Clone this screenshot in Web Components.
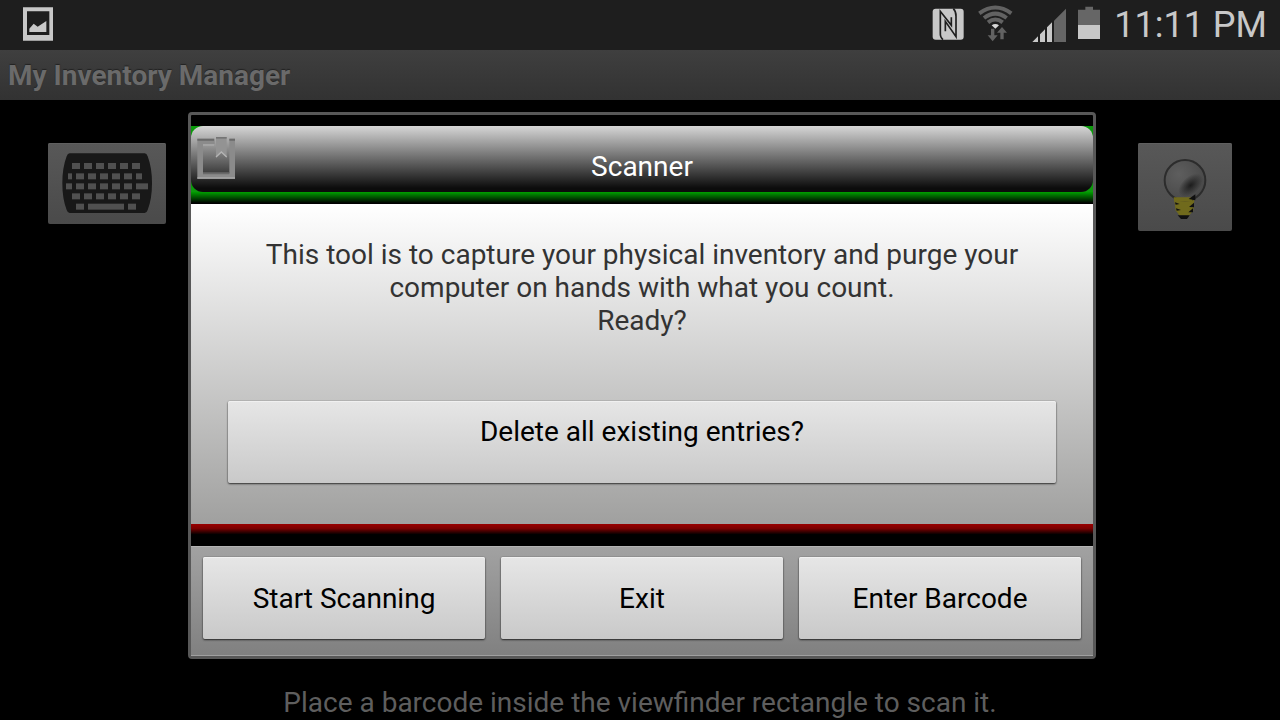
<!DOCTYPE html>
<html lang="en">
<head>
<meta charset="utf-8">
<meta name="viewport" content="width=device-width, initial-scale=1">
<title>My Inventory Manager</title>
<style>
    html, body {
        margin: 0;
        background: #000;
    }
    body {
        font-family: Roboto, "Noto Sans", sans-serif;
        font-size: 28px;
        line-height: 33px;
    }
</style>
</head>
<body>
<inventory-app></inventory-app>

<script>
class StatusBar extends HTMLElement {
    constructor() {
        super();
        this.shadowDOM = this.attachShadow({ mode: 'open' });
    }

    connectedCallback() {
        this.render();
    }

    render() {
        this.shadowDOM.innerHTML = `
        <style>
            :host {
                display: flex;
                align-items: center;
                gap: 12px;
                height: 50px;
                padding: 0 13px 0 20px;
                box-sizing: border-box;
                background: #1e1e1e;
                color: #c8c8c8;
            }
            svg {
                display: block;
                flex: none;
                height: 40px;
            }
            .spacer {
                flex: 1;
            }
            time {
                font-size: 36px;
                line-height: 46px;
                white-space: nowrap;
            }
        </style>
        <svg width="36" viewBox="60 15 108 120" aria-hidden="true">
            <path fill="#c8c8c8" fill-rule="evenodd" d="M69 22H159V122H69ZM81 34V105H148V34Z"/>
            <path fill="#c8c8c8" d="M88 96V86L101 71L113 80L139 63V96Z"/>
        </svg>
        <span class="spacer"></span>
        <svg width="34" viewBox="39 15 102 120" aria-hidden="true">
            <rect x="41" y="26" width="93" height="93" rx="9" fill="#c8c8c8"/>
            <g fill="none" stroke="#1e1e1e" stroke-width="5">
                <path d="M72 119Q63 112 64 98V34L97 76V52"/>
                <path d="M79 94V64L111 110V48Q111 34 103 26"/>
            </g>
        </svg>
        <svg width="40" viewBox="177 15 120 120" aria-hidden="true">
            <g fill="none" stroke="#626262" stroke-width="12">
                <path d="M181 40Q229 5 277 40"/>
                <path d="M195 54Q229 28 263 54"/>
                <path d="M207 67Q229 50 251 67"/>
            </g>
            <path fill="#d8d8d8" d="M218 76Q229 68 240 76L229 86Z"/>
            <path fill="#626262" d="M216 86H226V106H236L221 124L206 106H216ZM249 81L264 98H254V118H244V98H234Z"/>
        </svg>
        <svg width="36" viewBox="333 15 108 120" aria-hidden="true">
            <path fill="#666" d="M405 62L441 26V126H405Z"/>
            <path fill="#c8c8c8" d="M340 126L357 109V126ZM363 103L378 88V126H363ZM384 82L399 67V126H384Z"/>
        </svg>
        <svg width="24" viewBox="477 15 72 120" aria-hidden="true">
            <path fill="#666" d="M499 20H522V29H543V75H477V29H499Z"/>
            <path fill="#c8c8c8" d="M477 75H543V117H477Z"/>
        </svg>
        <time datetime="23:11">11:11 PM</time>`;
    }
}

class TitleBar extends HTMLElement {
    constructor() {
        super();
        this.shadowDOM = this.attachShadow({ mode: 'open' });
    }

    connectedCallback() {
        this.render();
    }

    render() {
        this.shadowDOM.innerHTML = `
        <style>
            :host {
                display: flex;
                align-items: center;
                height: 50px;
                padding: 0 8px;
                box-sizing: border-box;
                background: linear-gradient(#3f3f3f, #323232);
                color: #6a6a6a;
            }
            h1 {
                margin: 0;
                font-size: 28px;
                font-weight: bold;
                text-shadow: 0 -1px 1px #222;
            }
        </style>
        <h1><slot></slot></h1>`;
    }
}

class ToolButton extends HTMLElement {
    constructor() {
        super();
        this.shadowDOM = this.attachShadow({ mode: 'open' });
    }

    connectedCallback() {
        this.render();
    }

    render() {
        this.shadowDOM.innerHTML = `
        <style>
            :host {
                display: block;
            }
            button {
                display: block;
                margin: 0;
                padding: 10px 14px;
                border: 0;
                border-radius: 2px;
                background: linear-gradient(#585858, #4a4a4a);
                box-shadow: inset 0 1px #606060;
            }
            ::slotted(svg) {
                display: block;
            }
        </style>
        <button type="button" aria-label="${this.getAttribute('label')}"><slot></slot></button>`;
    }
}

class PushButton extends HTMLElement {
    constructor() {
        super();
        this.shadowDOM = this.attachShadow({ mode: 'open' });
    }

    connectedCallback() {
        this.render();
    }

    render() {
        this.shadowDOM.innerHTML = `
        <style>
            :host {
                display: block;
            }
            button {
                display: block;
                width: 100%;
                height: 82px;
                margin: 0;
                padding: 2px 0 0;
                border: 0;
                border-radius: 2px;
                background: linear-gradient(#e6e6e6, #c9c9c9);
                box-shadow: 0 0 1px rgba(0, 0, 0, 0.6), 0 1px 2px rgba(0, 0, 0, 0.7), inset 0 1px #f0f0f0;
                color: #000;
                font: inherit;
            }
            :host([raised]) button {
                padding-bottom: 22px;
            }
        </style>
        <button type="button"><slot></slot></button>`;
    }
}

class ScannerDialog extends HTMLElement {
    constructor() {
        super();
        this.shadowDOM = this.attachShadow({ mode: 'open' });
    }

    connectedCallback() {
        this.render();
    }

    render() {
        this.shadowDOM.innerHTML = `
        <style>
            :host {
                display: block;
                box-sizing: border-box;
                border: 3px solid #585858;
                border-radius: 4px;
                background: #000;
            }
            .top {
                margin-top: 11px;
                background: #0c9a0c;
            }
            header {
                position: relative;
                height: 66px;
                padding-top: 14px;
                box-sizing: border-box;
                border-radius: 12px;
                background: linear-gradient(#d6d6d6, #0c0c0c 94%);
                color: #fff;
                text-align: center;
            }
            h2 {
                margin: 0;
                padding: 10px 0;
                font-size: 28px;
                font-weight: normal;
            }
            header svg {
                position: absolute;
                left: 4px;
                top: 9px;
            }
            .green {
                height: 12px;
                background: linear-gradient(#00a000, #000 92%);
            }
            .content {
                padding: 34px 37px 41px;
                background: linear-gradient(#fff, #a0a09f);
            }
            .message {
                padding-bottom: 64px;
                color: #333;
                text-align: center;
            }
            .red {
                height: 22px;
                background: linear-gradient(#990000, #7c0000 20%, #000 48%);
            }
            footer {
                display: grid;
                grid-template-columns: repeat(3, 1fr);
                gap: 16px;
                padding: 11px 12px 17px;
                background: linear-gradient(#a2a2a2, #808080);
                box-shadow: inset 0 1px #b4b4b4, inset 0 -1px #a0a0a0;
            }
        </style>
        <div class="top">
            <header>
                <svg width="42" height="46" viewBox="45 90 126 138" aria-hidden="true">
                    <path fill="#8b8b8b" d="M52 101H104V117H69V205H148V101H165V221H52Z"/>
                    <path fill="#6a6a6a" d="M52 101H102V107H52ZM148 101H165V107H148ZM69 202H148V208H69Z"/>
                    <path fill="#a8a8a8" d="M52 217H165V221H52ZM69 118H102V122H69Z"/>
                    <path fill="#939393" d="M108 96H140V158L124 142L108 158Z"/>
                    <path fill="#757575" d="M108 96H140V101H108Z"/>
                    <path fill="none" stroke="#b4b4b4" stroke-width="4" d="M108 156L124 141L140 156"/>
                </svg>
                <h2><slot name="title"></slot></h2>
            </header>
            <div class="green"></div>
        </div>
        <div class="content">
            <div class="message"><slot name="message"></slot></div>
            <slot></slot>
        </div>
        <div class="red"></div>
        <footer><slot name="action"></slot></footer>`;
    }
}

class InventoryApp extends HTMLElement {
    constructor() {
        super();
        this.shadowDOM = this.attachShadow({ mode: 'open' });
    }

    connectedCallback() {
        this.render();
    }

    // key caps of the keyboard picture: y, then x and width of each key
    keys() {
        const rows = [
            [98, [123, 24], [159, 24], [195, 24], [231, 24], [267, 24], [303, 24]],
            [129, [111, 12], [135, 24], [171, 24], [207, 24], [243, 24], [279, 24], [315, 18]],
            [159, [105, 18], [135, 24], [171, 24], [207, 24], [243, 24], [279, 24], [315, 36]],
            [189, [123, 24], [159, 24], [195, 24], [231, 24], [267, 24], [303, 24]],
            [220, [135, 24], [171, 108], [291, 24]]
        ];
        return rows.map(([y, ...row]) => row.map(([x, w]) =>
            `<rect x="${x}" y="${y}" width="${w}" height="18"/>`).join('')).join('');
    }

    render() {
        this.shadowDOM.innerHTML = `
        <style>
            :host {
                display: flex;
                flex-direction: column;
                position: relative;
                min-height: 100vh;
            }
            main {
                flex: 1;
                display: flex;
                flex-direction: column;
                justify-content: space-between;
                padding-bottom: 1px;
            }
            .tools {
                display: flex;
                justify-content: space-between;
                align-items: flex-start;
                padding: 43px 48px 0;
            }
            .hint {
                margin: 0;
                color: #5e5e5e;
                text-align: center;
            }
            .overlay {
                position: absolute;
                inset: 50px 0 0;
                display: grid;
                align-items: center;
                padding: 0 184px 0 188px;
            }
            p {
                margin: 0;
            }
        </style>
        <status-bar></status-bar>
        <title-bar>My Inventory Manager</title-bar>
        <main>
            <div class="tools">
                <tool-button label="Keyboard">
                    <svg width="90" height="61" viewBox="93 68 270 183" aria-hidden="true">
                        <path fill="#181818" d="M116 69H341Q347 69 350 78Q363 112 363 159Q363 206 350 239Q347 248 341 248H116Q110 248 107 239Q94 206 94 159Q94 112 107 78Q110 69 116 69Z"/>
                        <g fill="#505050">${this.keys()}</g>
                    </svg>
                </tool-button>
                <tool-button label="Light">
                    <svg width="66" height="68" viewBox="95 68 198 204" aria-hidden="true">
                        <defs>
                            <radialGradient id="shade">
                                <stop offset="0" stop-color="#1c1c1c"/>
                                <stop offset="1" stop-color="#1c1c1c" stop-opacity="0"/>
                            </radialGradient>
                            <radialGradient id="glass" cx="0.35" cy="0.35" r="0.7">
                                <stop offset="0" stop-color="#5e5e5e"/>
                                <stop offset="1" stop-color="#484848"/>
                            </radialGradient>
                        </defs>
                        <path fill="#706a1c" d="M160 196H223L219 240L206 256H178L166 240Z"/>
                        <circle cx="194" cy="150" r="61" fill="url(#glass)" stroke="#2c2c2c" stroke-width="6"/>
                        <ellipse cx="211" cy="165" rx="44" ry="26" fill="url(#shade)" transform="rotate(-42 211 165)"/>
                        <path fill="#706a1c" d="M160 201H216V214H162Z"/>
                        <path fill="#101010" d="M172 255H208L200 266H182ZM225 192V210L205 206ZM221 217V231L206 230ZM218 234V246L204 246ZM164 216L178 221L166 223ZM167 234L182 239L169 241Z"/>
                    </svg>
                </tool-button>
            </div>
            <p class="hint">Place a barcode inside the viewfinder rectangle to scan it.</p>
        </main>
        <div class="overlay">
            <scanner-dialog role="dialog" aria-label="Scanner">
                <span slot="title">Scanner</span>
                <p slot="message">This tool is to capture your physical inventory and purge your computer on hands with what you count.<br>Ready?</p>
                <push-button raised>Delete all existing entries?</push-button>
                <push-button slot="action">Start Scanning</push-button>
                <push-button slot="action">Exit</push-button>
                <push-button slot="action">Enter Barcode</push-button>
            </scanner-dialog>
        </div>`;
    }
}

customElements.define('status-bar', StatusBar);
customElements.define('title-bar', TitleBar);
customElements.define('tool-button', ToolButton);
customElements.define('push-button', PushButton);
customElements.define('scanner-dialog', ScannerDialog);
customElements.define('inventory-app', InventoryApp);
</script>
</body>
</html>
